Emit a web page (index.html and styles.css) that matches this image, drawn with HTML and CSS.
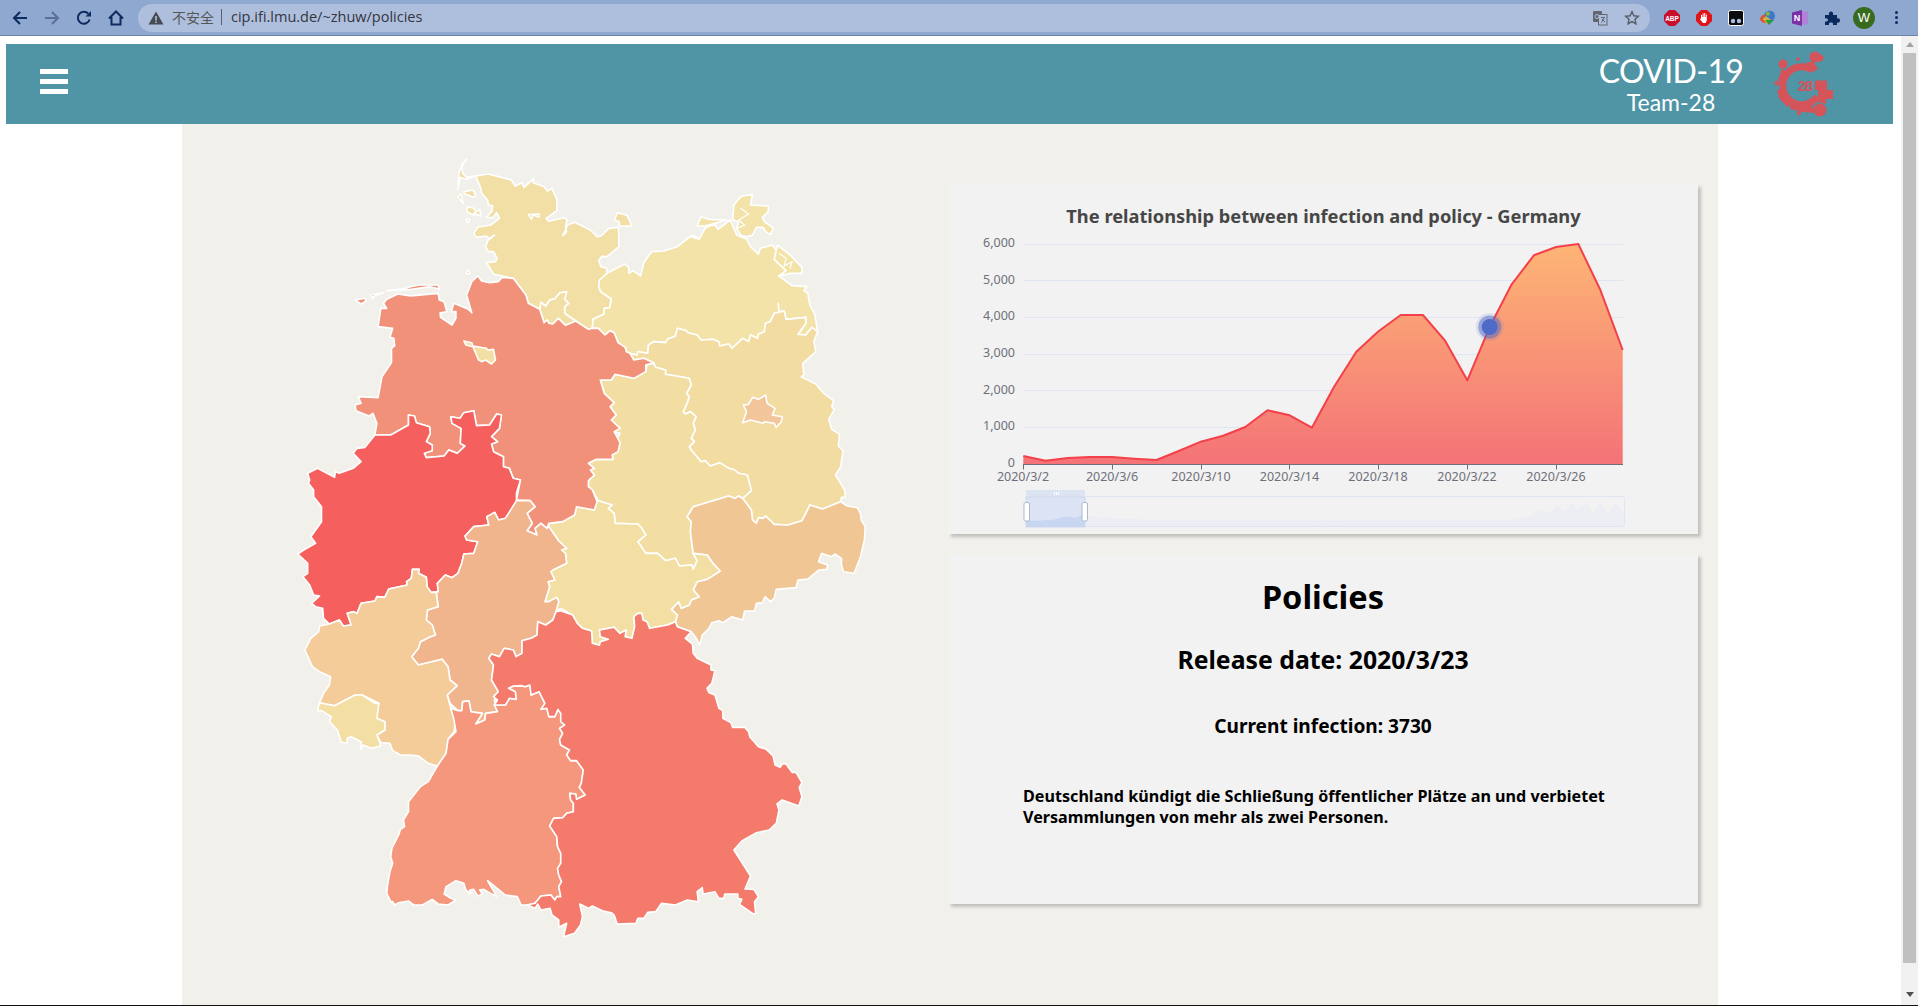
FILE: index.html
```html
<!DOCTYPE html>
<html lang="en">
<head>
  <meta charset="UTF-8">
  <title>COVID-19 Team-28 - Policies</title>
  <link rel="stylesheet" href="styles.css">
</head>
<body>

  <div class="toolbar">
    <div class="nav-icons">
      <svg class="tb-icon" viewBox="0 0 16 16"><path class="stroke-dark" d="M15 8H2M8 2 2 8l6 6"/></svg>
      <svg class="tb-icon" viewBox="0 0 16 16"><path class="stroke-muted" d="M1 8h13M8 2l6 6-6 6"/></svg>
      <svg class="tb-icon" viewBox="0 0 16 16"><path class="stroke-dark" d="M13.6 9.5A6 6 0 1 1 12.3 3.7"/><path class="fill-dark" d="M9.5 6.5H15V1z"/></svg>
      <svg class="tb-icon" viewBox="0 0 16 16"><path class="stroke-dark" d="M1 8.5 8 1.5l7 7M3.5 7v7.5h9V7"/></svg>
    </div>
    <div class="omnibox">
      <svg class="tb-icon" viewBox="0 0 16 16"><path fill="#474b52" d="M8 1.5 15.5 14.5H.5z"/><path fill="#aebfde" d="M7.2 6h1.6v4.5H7.2zM7.2 11.4h1.6V13H7.2z"/></svg>
      <span class="not-secure">不安全</span>
      <span class="url">cip.ifi.lmu.de/~zhuw/policies</span>
      <svg class="tb-icon translate" viewBox="0 0 16 16"><rect x="1" y="1" width="9" height="11" rx="1" fill="#62666d"/><rect x="6.5" y="4.5" width="8.5" height="10.5" fill="#aebfde" stroke="#62666d"/><path d="M9 7.5h4M12.5 7.5 9.500 12.500M10 9l3 3" stroke="#62666d" fill="none"/><circle cx="5" cy="6.500" r="2" fill="none" stroke="#aebfde"/></svg>
      <svg class="tb-icon" viewBox="0 0 16 16"><path fill="none" stroke="#5a5f68" stroke-width="1.500" d="m8 1.800 1.900 4 4.400.5-3.300 3 .9 4.400L8 11.500l-3.900 2.200.9-4.400-3.300-3 4.400-.5z"/></svg>
    </div>
    <div class="extensions">
      <div class="ext"><svg class="tb-icon" viewBox="0 0 16 16"><path fill="#c8102e" d="M5 0h6l5 5v6l-5 5H5l-5-5V5z"/><text class="ext-abp" x="8" y="10.800">ABP</text></svg></div>
      <div class="ext"><svg class="tb-icon" viewBox="0 0 16 16"><path fill="#e0131a" d="M5 0h6l5 5v6l-5 5H5l-5-5V5z"/><path fill="#fff" d="M5 8V5h1v2h.6V3.500h1V7h.6V3h1v4h.6V4.500h1V10l-1 3H7L4 9.500l.6-.7z"/></svg></div>
      <div class="ext"><svg class="tb-icon" viewBox="0 0 16 16"><rect x=".5" y=".5" width="15" height="15" rx="2" fill="#0b0b10" stroke="#fff"/><circle cx="5" cy="11" r="2.200" fill="#a9bfe0"/><circle cx="11" cy="11" r="2.200" fill="#a9bfe0"/></svg></div>
      <div class="ext"><svg class="tb-icon" viewBox="0 0 16 16"><circle cx="9.500" cy="6" r="5.500" fill="#3f78c9"/><path fill="#7bb843" d="M6 2c2-1 4 0 4 2S7 6 6 5z"/><path fill="#e0522a" d="M0 9c1-4 4-5 6-4L3 9l4 4C3 13 1 12 0 9z"/><path fill="#f0c020" d="M3 9l3-3 5 4-4 4z" opacity=".8"/><path fill="#2d9a3a" d="M5 10h9l-5 5z"/></svg></div>
      <div class="ext"><svg class="tb-icon" viewBox="0 0 16 16"><rect x="5" y="1.500" width="11" height="13" rx="1" fill="#b183d6"/><path fill="#7c30a8" d="M0 2.500 10 0v16L0 13.500z"/><text class="ext-n" x="5" y="11">N</text></svg></div>
      <div class="ext"><svg class="tb-icon" viewBox="0 0 16 16"><path fill="#0a2a5e" d="M1 5h4c-.5-2 .5-3.500 2-3.500S9.500 3 9 5h4v3.500c2-.5 3 .5 3 2s-1 2.500-3 2V15H9c.5-2-.5-2.500-2-2.500S4.500 13 5 15H1v-3.500c2 .5 3-.5 3-1.500S3 8 1 8.500z"/></svg></div>
      <div class="ext"><div class="avatar">W</div></div>
      <div class="ext"><div class="menu-dots"><i></i><i></i><i></i></div></div>
    </div>
  </div>

  <div class="window">
    <div class="page">
      <header class="site-header">
        <div class="hamburger"><span></span><span></span><span></span></div>
        <div class="brand">
          <div class="brand-text">
            <div class="brand-title">COVID-19</div>
            <div class="brand-team">Team-28</div>
          </div>
          <svg class="brand-logo" viewBox="0 0 90 80">
            <path class="logo-ring" d="M52.600 26.100A19 19 0 1 0 57.300 52.600"/>
            <g class="logo-fill">
              <circle cx="55" cy="13" r="5.500"/><circle cx="60" cy="14" r="3.500"/>
              <circle cx="23" cy="20" r="4.500"/><circle cx="38" cy="15" r="1.800"/>
              <circle cx="17" cy="39" r="2.500"/><circle cx="39" cy="69" r="2.200"/>
              <circle cx="60" cy="66" r="6.500"/>
              <path d="M46 18h8l4 7-5 3zM55 36.500h12V46h6v9h-7v5l-8-2V46h-3zM17 46h8l6 14-4 3-8-9zM30 60l12 2 10-1 3 8-12-1-13-3zM22 24l6 6-6 8-4-2z"/>
            </g>
            <text class="logo-num" x="44.700" y="47">28</text>
          </svg>
        </div>
      </header>

      <main class="content">
        <svg class="map" viewBox="0 0 1568 2460" preserveAspectRatio="none">
          <!-- Schleswig-Holstein -->
          <polygon class="st-sh" points="495,108 527,102 585,120 595,138 612,128 617,142 642,115 640,128 668,140 676,153 688,145 700,178 700,212 673,235 680,244 718,233 726,240 722,262 725,276 715,287 728,255 745,247 785,270 802,290 812,288 832,265 856,262 857,320 827,350 814,349 806,362 812,380 826,385 827,400 808,420 806,440 811,455 838,477 834,503 820,505 820,522 792,538 789,565 780,568 748,543 720,520 720,500 730,490 720,478 725,455 708,458 695,476 682,480 672,498 660,487 657,508 628,490 622,465 590,415 541,403 522,368 545,365 549,355 540,335 527,335 520,320 528,296 543,285 530,298 522,288 497,292 490,280 500,262 533,255 555,235 548,218 538,233 522,232 535,215 538,197 527,195 525,180 510,160 508,145"/>
          <polygon class="st-sh" points="846,240 853,218 878,226 890,258 858,258 858,245"/>
          <polygon class="st-sh" points="628,224 655,222 655,232 640,224 636,238"/>
          <polygon class="st-sh" points="472,58 460,78 462,100 472,112 495,108 470,118 455,112 450,150 452,100 462,70"/>
          <polygon class="st-sh" points="465,155 488,150 495,165 490,172 468,162"/>
          <polygon class="st-sh" points="450,170 458,162 463,190"/>
          <polygon class="st-sh" points="475,200 490,205 500,222 490,225 472,215"/>
          <polygon class="st-sh" points="505,208 508,228 490,220"/>
          <polygon class="st-sh" points="472,235 480,240 475,248 470,240"/>
          <!-- Hamburg -->
          <polygon class="st-sh" points="657,508 660,487 672,498 682,480 695,476 708,458 725,455 720,478 730,490 720,500 720,520 748,543 722,556 704,535 690,552 680,550 676,540 668,548 660,520"/>
          <!-- Mecklenburg-Vorpommern -->
          <polygon class="st-mv" points="827,400 872,372 882,383 882,400 893,392 912,408 920,368 940,335 970,333 1005,320 1042,285 1060,295 1040,290 1060,298 1075,265 1098,252 1108,268 1138,240 1148,265 1155,285 1180,297 1190,320 1210,343 1215,325 1245,315 1258,335 1250,358 1280,392 1262,408 1295,437 1332,440 1325,452 1335,460 1340,495 1352,522 1360,575 1345,562 1330,585 1310,583 1330,550 1330,532 1280,538 1275,513 1262,515 1260,490 1262,517 1250,520 1240,545 1228,550 1225,575 1210,582 1208,595 1190,585 1185,605 1170,595 1143,625 1135,612 1112,618 1110,605 1095,598 1065,600 1055,585 1032,578 1028,572 1005,565 1000,588 980,598 975,608 945,605 932,615 930,640 905,635 903,645 890,642 876,635 873,622 855,608 845,578 835,572 822,585 805,565 790,565 792,538 820,522 820,505 834,503 838,477 811,455 806,440 808,420"/>
          <polygon class="st-mv" points="1065,230 1085,238 1130,240 1075,258 1055,258"/>
          <polygon class="st-mv" points="1148,195 1165,170 1195,162 1190,195 1235,198 1235,215 1220,232 1225,245 1248,265 1240,283 1228,275 1222,262 1205,262 1195,285 1180,290 1165,285 1155,265 1160,245 1145,240"/>
          <polyline class="st-line" points="1165,205 1185,222 1160,240 1175,255 1155,265"/>
          <polygon class="st-mv" points="1262,408 1280,392 1250,358 1258,315 1290,345 1320,382 1320,400 1290,400"/>
          <polyline class="st-line" points="1262,340 1280,355 1275,378 1295,365 1290,385"/>
          <!-- Brandenburg -->
          <polygon class="st-bb" points="1005,565 1028,572 1032,578 1055,585 1065,600 1095,598 1110,605 1112,618 1135,612 1143,625 1170,595 1185,605 1190,585 1208,595 1210,582 1225,575 1228,550 1240,545 1250,520 1262,517 1275,513 1280,538 1330,532 1330,550 1310,583 1330,585 1345,562 1360,575 1350,605 1355,635 1322,670 1325,705 1318,710 1355,732 1375,760 1400,782 1395,800 1402,808 1388,838 1395,868 1415,882 1412,918 1424,932 1418,980 1405,1005 1428,1050 1430,1072 1420,1072 1418,1085 1372,1107 1340,1095 1330,1120 1320,1142 1285,1155 1250,1153 1228,1128 1222,1135 1210,1133 1205,1150 1195,1140 1192,1110 1170,1075 1192,1052 1182,1005 1160,1000 1150,990 1135,985 1112,968 1088,978 1075,962 1065,965 1040,930 1035,920 1048,905 1040,895 1050,870 1045,850 1052,830 1038,815 1025,822 1020,815 1030,788 1035,770 1028,760 1040,735 1035,715 975,703 975,690 950,682 945,668 920,655 895,660 885,640 876,635 890,642 903,645 905,635 930,640 932,615 945,605 975,608 980,598 1000,588"/>
          <!-- Berlin -->
          <polygon class="st-be" points="1195,772 1210,778 1228,765 1232,790 1252,805 1245,825 1270,830 1268,845 1255,862 1250,850 1225,845 1222,850 1190,840 1170,848 1180,815 1172,795 1185,793"/>
          <!-- Sachsen-Anhalt -->
          <polygon class="st-st" points="810,720 838,720 847,703 895,715 925,695 928,675 945,670 950,682 975,690 975,703 1035,715 1040,735 1028,760 1035,770 1030,788 1020,815 1025,822 1038,815 1052,830 1045,850 1050,870 1040,895 1048,905 1035,920 1040,930 1065,965 1075,962 1088,978 1112,968 1135,985 1150,990 1160,1000 1182,1005 1192,1052 1170,1075 1160,1068 1150,1075 1135,1068 1045,1100 1030,1130 1040,1145 1038,1175 1040,1195 1045,1240 1055,1262 1045,1288 1042,1275 1010,1278 1000,1255 975,1262 955,1240 925,1240 905,1205 925,1185 915,1165 905,1152 848,1150 845,1120 830,1105 840,1095 805,1082 790,1050 780,1040 780,1022 795,1005 785,990 795,985 780,970 800,958 842,958 840,945 855,935 860,908 848,905 860,880 845,875 860,865 838,840 850,825 835,800 845,788 820,760"/>
          <!-- Sachsen -->
          <polygon class="st-sn" points="1045,1100 1135,1068 1150,1075 1160,1068 1170,1075 1192,1110 1195,1140 1205,1150 1210,1133 1222,1135 1228,1128 1250,1153 1285,1155 1320,1142 1330,1120 1340,1095 1372,1107 1418,1085 1432,1097 1460,1103 1468,1120 1470,1140 1480,1160 1478,1200 1468,1250 1452,1300 1425,1295 1420,1275 1420,1255 1403,1242 1395,1250 1370,1240 1362,1265 1385,1275 1383,1288 1362,1290 1335,1317 1310,1320 1305,1343 1255,1348 1250,1375 1240,1385 1227,1370 1220,1388 1205,1390 1200,1413 1175,1413 1170,1440 1143,1430 1120,1448 1110,1442 1092,1448 1085,1465 1068,1485 1062,1515 1050,1490 1040,1475 1005,1460 1000,1445 1005,1425 990,1408 1008,1385 1015,1405 1035,1395 1040,1380 1060,1370 1045,1350 1055,1325 1080,1318 1113,1293 1095,1270 1080,1245 1045,1240 1040,1195 1038,1175 1040,1145 1030,1130"/>
          <!-- Thueringen -->
          <polygon class="st-th" points="805,1082 840,1095 830,1105 845,1120 848,1150 905,1152 915,1165 925,1185 905,1205 925,1240 955,1240 975,1262 1000,1255 1010,1278 1042,1275 1045,1288 1055,1262 1045,1240 1080,1245 1095,1270 1113,1293 1080,1318 1055,1325 1045,1350 1060,1370 1040,1380 1035,1395 1015,1405 1008,1385 990,1408 1005,1425 1000,1445 980,1455 935,1465 928,1445 918,1440 915,1420 905,1420 895,1430 897,1460 890,1495 873,1490 875,1470 860,1480 845,1462 808,1470 810,1490 830,1498 810,1505 808,1516 790,1510 788,1473 765,1465 752,1450 740,1425 710,1405 698,1415 695,1385 705,1385 700,1372 680,1385 670,1385 682,1340 678,1325 695,1320 685,1295 690,1290 725,1270 722,1240 712,1230 725,1225 705,1203 680,1160 680,1150 715,1145 745,1125 750,1100 795,1110 795,1085"/>
          <!-- Niedersachsen -->
          <polygon class="st-ni" points="500,408 510,423 530,428 552,425 562,412 590,415 622,465 628,490 657,508 660,520 668,548 676,540 680,550 690,552 704,535 722,556 748,543 780,568 790,565 805,565 822,585 835,572 845,578 855,608 873,622 876,635 885,640 895,660 920,655 945,668 925,675 925,695 895,715 847,703 838,720 810,720 820,760 845,788 835,800 850,825 838,840 860,865 845,875 860,908 855,935 840,945 842,958 800,958 780,970 795,985 785,990 795,1005 780,1022 780,1040 790,1050 802,1085 795,1110 750,1100 745,1125 715,1145 680,1150 675,1165 660,1150 645,1165 650,1185 625,1172 638,1150 625,1120 645,1100 633,1082 598,1080 608,1020 590,1015 580,985 565,980 565,950 540,935 535,912 550,905 535,890 555,865 560,825 548,822 530,855 497,857 490,812 465,818 455,835 432,830 435,850 458,865 456,910 468,918 448,940 427,930 415,948 370,953 365,940 385,932 385,915 370,905 380,880 378,860 345,848 340,828 325,825 325,855 280,885 240,885 245,850 235,820 225,828 192,812 190,795 205,790 198,770 248,773 258,710 282,668 282,625 290,617 288,595 278,592 285,565 248,560 255,505 270,505 262,490 270,478 298,462 330,468 400,460 403,480 415,485 422,515 405,518 406,532 435,555 445,535 445,515 433,515 440,490 475,507 485,518 472,465 485,425"/>
          <polygon class="st-ni" points="190,480 215,475 218,483 205,492"/>
          <polygon class="st-ni" points="230,465 262,458 235,470 235,477"/>
          <polygon class="st-ni" points="270,452 320,445 330,440 352,435 400,435 403,447 380,440 320,450"/>
          <polygon class="st-ni" points="470,400 475,390 480,402"/>
          <!-- Bremen -->
          <polygon class="st-th" points="465,603 485,608 488,618 522,625 525,630 540,628 545,660 535,672 520,660 510,665 502,660 488,620 470,615"/>
          <!-- Nordrhein-Westfalen -->
          <polygon class="st-nw" points="240,885 280,885 325,855 325,825 340,828 345,848 378,860 380,880 370,905 385,915 385,932 365,940 370,953 415,948 427,930 448,940 468,918 456,910 458,865 435,850 432,830 455,835 465,818 490,812 497,857 530,855 548,822 560,825 555,865 535,890 550,905 535,912 540,935 565,950 565,980 580,985 590,1015 608,1020 598,1060 598,1085 570,1135 553,1140 543,1117 523,1130 528,1155 490,1160 468,1188 472,1200 500,1205 490,1240 465,1242 460,1268 450,1300 435,1313 418,1305 398,1330 400,1355 382,1357 372,1340 370,1312 350,1300 352,1288 335,1288 332,1315 320,1325 322,1335 275,1347 265,1372 245,1370 240,1383 205,1390 195,1420 185,1415 170,1420 180,1455 160,1458 150,1440 125,1452 110,1435 108,1405 90,1400 80,1390 100,1368 85,1365 75,1335 58,1310 70,1300 70,1270 45,1242 60,1230 90,1210 78,1190 105,1145 105,1100 85,1070 85,1050 72,1030 75,1020 70,1000 95,985 138,1012 140,995 150,1000 185,985 205,965 185,940 195,925 215,922"/>
          <!-- Hessen -->
          <polygon class="st-he" points="598,1082 633,1082 645,1100 625,1120 638,1150 625,1172 650,1185 645,1165 660,1150 675,1165 680,1160 705,1203 725,1225 712,1230 722,1240 725,1270 690,1290 685,1295 695,1320 678,1325 682,1340 670,1385 680,1385 700,1372 705,1385 698,1415 690,1440 672,1455 652,1445 650,1485 635,1495 612,1502 612,1540 597,1550 590,1530 567,1525 555,1550 535,1542 528,1555 540,1575 535,1620 545,1640 552,1655 542,1680 550,1715 520,1720 518,1740 495,1752 512,1720 483,1715 478,1683 462,1685 460,1712 450,1712 430,1690 423,1665 448,1637 430,1620 425,1580 410,1558 350,1575 333,1550 350,1525 355,1505 380,1490 393,1485 385,1455 370,1440 373,1410 400,1400 395,1357 400,1355 398,1330 418,1305 435,1313 450,1300 460,1268 465,1242 490,1240 500,1205 472,1200 468,1188 490,1160 528,1155 523,1130 543,1117 553,1140 570,1135"/>
          <!-- Rheinland-Pfalz -->
          <polygon class="st-rp" points="100,1458 125,1452 150,1440 160,1458 180,1455 170,1420 185,1415 195,1420 205,1390 240,1383 245,1370 265,1372 275,1347 322,1335 320,1325 332,1315 335,1288 352,1288 350,1300 370,1312 372,1340 382,1357 395,1357 400,1400 373,1410 370,1440 385,1455 393,1485 380,1490 355,1505 350,1525 333,1550 350,1575 410,1558 425,1580 430,1620 448,1637 423,1665 432,1705 445,1740 440,1775 425,1798 420,1840 398,1878 375,1870 350,1848 330,1845 305,1845 285,1832 278,1810 255,1808 245,1785 265,1770 265,1745 243,1735 250,1690 208,1665 190,1665 138,1697 100,1688 110,1660 125,1635 128,1610 100,1595 82,1580 75,1562 63,1530 78,1495 98,1475"/>
          <!-- Saarland -->
          <polygon class="st-th" points="100,1688 138,1697 190,1665 208,1665 240,1690 250,1690 245,1735 265,1745 265,1770 245,1785 255,1818 230,1825 210,1815 205,1828 205,1805 180,1790 170,1795 170,1810 155,1807 145,1770 125,1745 130,1730 105,1712 95,1712"/>
          <!-- Baden-Wuerttemberg -->
          <polygon class="st-bw" points="398,1878 420,1840 425,1798 445,1775 440,1740 432,1705 450,1712 460,1712 462,1685 478,1683 483,1715 512,1720 495,1752 518,1740 520,1720 550,1715 542,1695 570,1695 580,1675 597,1678 595,1655 578,1645 590,1638 612,1637 620,1640 632,1635 635,1665 655,1655 670,1690 660,1708 675,1705 680,1730 695,1730 703,1708 710,1720 710,1745 720,1755 707,1765 715,1780 707,1798 710,1815 732,1830 725,1845 735,1862 750,1862 767,1890 762,1930 757,1942 772,1965 750,1978 748,1962 733,1960 735,1980 742,1990 742,2015 725,2020 715,2033 692,2035 682,2058 700,2090 702,2120 710,2140 710,2170 702,2185 705,2205 712,2225 705,2240 710,2270 700,2270 695,2280 685,2265 660,2268 645,2290 625,2295 610,2295 600,2270 570,2265 525,2222 548,2270 515,2248 505,2250 512,2262 500,2268 490,2248 480,2250 483,2262 470,2250 465,2230 445,2222 420,2240 415,2262 432,2275 445,2280 425,2295 400,2292 385,2278 360,2295 338,2295 325,2283 300,2288 290,2295 285,2285 280,2285 270,2260 272,2235 278,2195 285,2170 280,2150 283,2125 300,2085 305,2068 315,2060 312,2040 325,2015 325,1985 355,1940 375,1925"/>
          <!-- Bayern -->
          <polygon class="st-by" points="710,1412 740,1425 752,1450 765,1465 788,1473 790,1510 808,1516 810,1505 830,1498 810,1490 808,1470 845,1462 860,1480 875,1470 873,1490 890,1495 897,1460 895,1430 905,1420 915,1420 918,1440 928,1445 935,1465 980,1455 1000,1445 1005,1460 1040,1475 1025,1495 1043,1512 1045,1540 1055,1555 1090,1575 1090,1590 1100,1592 1092,1630 1080,1645 1085,1658 1100,1665 1110,1705 1120,1712 1120,1735 1140,1748 1145,1762 1175,1762 1185,1775 1188,1790 1210,1820 1230,1828 1247,1848 1252,1875 1265,1882 1270,1872 1280,1872 1295,1897 1305,1897 1320,1928 1313,1942 1320,1970 1312,1998 1270,1980 1257,1992 1262,2010 1255,2050 1237,2070 1205,2078 1168,2103 1148,2130 1190,2208 1176,2247 1198,2248 1210,2270 1200,2285 1203,2320 1197,2322 1162,2293 1168,2278 1158,2275 1158,2262 1125,2262 1122,2275 1110,2275 1100,2255 1070,2262 1068,2243 1055,2255 1058,2285 1030,2280 1000,2295 965,2290 950,2315 930,2317 920,2335 905,2335 900,2350 853,2352 845,2325 838,2318 815,2312 790,2298 780,2305 758,2292 765,2330 760,2355 745,2380 717,2390 725,2350 705,2362 705,2340 688,2325 683,2305 660,2310 652,2292 645,2305 625,2295 645,2290 660,2268 685,2265 695,2280 700,2270 710,2270 705,2240 712,2225 705,2205 702,2185 710,2170 710,2140 702,2120 700,2090 682,2058 692,2035 715,2033 725,2020 742,2015 742,1990 735,1980 733,1960 748,1962 750,1978 772,1965 757,1942 762,1930 767,1890 750,1862 735,1862 725,1845 732,1830 710,1815 707,1798 715,1780 707,1765 720,1755 710,1745 710,1720 703,1708 695,1730 680,1730 675,1705 660,1708 670,1690 655,1655 635,1665 632,1635 620,1640 612,1637 590,1638 578,1645 595,1655 597,1678 580,1675 570,1695 542,1695 550,1680 540,1670 552,1655 545,1640 535,1620 540,1575 528,1555 535,1542 555,1550 567,1525 590,1530 597,1550 612,1540 612,1502 635,1495 650,1485 652,1445 672,1455 690,1440 698,1415"/>
        </svg>

        <div class="cards">
          <section class="card">
            <svg class="chart" viewBox="948 184 750 350">
              <defs>
                <linearGradient id="areaFill" gradientUnits="userSpaceOnUse" x1="0" y1="244" x2="0" y2="464">
                  <stop offset="0" stop-color="#fdb575"/>
                  <stop offset="1" stop-color="#f47377"/>
                </linearGradient>
              </defs>
              <text class="chart-title" x="1323.500" y="223">The relationship between infection and policy - Germany</text>

              <g class="grid">
                <line x1="1023" x2="1623" y1="244.500" y2="244.500"/>
                <line x1="1023" x2="1623" y1="280.500" y2="280.500"/>
                <line x1="1023" x2="1623" y1="317.500" y2="317.500"/>
                <line x1="1023" x2="1623" y1="354.500" y2="354.500"/>
                <line x1="1023" x2="1623" y1="390.500" y2="390.500"/>
                <line x1="1023" x2="1623" y1="427.500" y2="427.500"/>
              </g>
              <g class="y-labels">
                <text x="1015" y="247">6,000</text>
                <text x="1015" y="284">5,000</text>
                <text x="1015" y="320">4,000</text>
                <text x="1015" y="357">3,000</text>
                <text x="1015" y="394">2,000</text>
                <text x="1015" y="430">1,000</text>
                <text x="1015" y="467">0</text>
              </g>

              <polygon class="area" points="1023.300,456 1045.500,460.700 1067.700,458 1089.900,457 1112.100,457 1134.300,458.700 1156.500,460 1178.700,451 1200.900,441.700 1223.100,435.700 1245.300,427 1267.500,410.300 1289.700,415.300 1311.900,427.700 1334.100,386.700 1356.300,351.700 1378.500,331.300 1400.700,315 1422.900,315 1445.100,340.700 1467.300,380.300 1489.500,327.300 1511.700,284.300 1533.900,255.300 1556.100,247 1578.300,244 1600.500,290.300 1622.700,350 1622.700,464.500 1023.300,464.500"/>
              <polyline class="line" points="1023.300,456 1045.500,460.700 1067.700,458 1089.900,457 1112.100,457 1134.300,458.700 1156.500,460 1178.700,451 1200.900,441.700 1223.100,435.700 1245.300,427 1267.500,410.300 1289.700,415.300 1311.900,427.700 1334.100,386.700 1356.300,351.700 1378.500,331.300 1400.700,315 1422.900,315 1445.100,340.700 1467.300,380.300 1489.500,327.300 1511.700,284.300 1533.900,255.300 1556.100,247 1578.300,244 1600.500,290.300 1622.700,350"/>

              <circle class="marker-halo-2" cx="1489.700" cy="327" r="14"/>
              <circle class="marker-halo-1" cx="1489.700" cy="327" r="11.500"/>
              <circle class="marker" cx="1489.700" cy="327" r="8"/>

              <path class="axis" d="M1023 464.500H1623M1023.500 464.500v5M1112.500 464.500v5M1201.500 464.500v5M1289.500 464.500v5M1378.500 464.500v5M1467.500 464.500v5M1556.500 464.500v5"/>
              <g class="x-labels">
                <text x="1023" y="481">2020/3/2</text>
                <text x="1112" y="481">2020/3/6</text>
                <text x="1201" y="481">2020/3/10</text>
                <text x="1289.500" y="481">2020/3/14</text>
                <text x="1378" y="481">2020/3/18</text>
                <text x="1467" y="481">2020/3/22</text>
                <text x="1556" y="481">2020/3/26</text>
              </g>

              <!-- range slider under the chart -->
              <polygon class="zoom-mini" points="1085,515.700 1093,515.700 1100,518.700 1107,516.700 1117,519 1125,518.300 1137,519.300 1173,520 1340,520.500 1500,519.700 1500,526 1085,526"/>
              <polygon class="zoom-mini" points="1500,520 1510,519.500 1517,518 1530,516 1540,510 1550,513.300 1556.700,505.700 1565,511.700 1571.700,503.300 1578.300,510 1586.700,502.300 1593.300,513.300 1600,502.300 1608.300,513.300 1615,503.300 1624.500,513.300 1624.500,526 1500,526"/>
              <rect class="zoom-track" x="1026.500" y="496.500" width="598" height="30" rx="2"/>
              <rect class="zoom-bar" x="1026" y="490" width="59" height="7"/>
              <path class="zoom-grip" d="M1054.500 492v3M1056.500 492v3M1058.500 492v3"/>
              <rect class="zoom-select" x="1026" y="497" width="59" height="30"/>
              <polygon class="zoom-inner" points="1026,520.500 1040,520.700 1055,519.500 1063,517 1069,516.500 1075,518 1081,515.700 1085,515.700 1085,527 1026,527"/>
              <rect class="zoom-handle" x="1024" y="502.500" width="5.500" height="18.500" rx="1.500"/>
              <rect class="zoom-handle" x="1082" y="502.500" width="5.500" height="18.500" rx="1.500"/>
            </svg>
          </section>

          <section class="card policy">
            <h1>Policies</h1>
            <h2>Release date: 2020/3/23</h2>
            <h3>Current infection: 3730</h3>
            <p>Deutschland kündigt die Schließung öffentlicher Plätze an und verbietet Versammlungen von mehr als zwei Personen.</p>
          </section>
        </div>
      </main>
    </div>

    <div class="scrollbar">
      <div class="arrow-up"></div>
      <div class="thumb"></div>
      <div class="arrow-down"></div>
    </div>
  </div>
  <div class="screen-edge"></div>

</body>
</html>
```

FILE: styles.css
```css
html, body {
  margin: 0;
  height: 1006px;
  overflow: hidden;
  background-color: white;
}

/* browser bar */
.toolbar {
  display: flex;
  align-items: center;
  height: 35px;
  padding-right: 6px;
  background-color: #8fa8d0;
  border-bottom: 1px solid #6f83a5;
}
.nav-icons {
  display: flex;
  gap: 16px;
  padding-left: 12px;
}
.tb-icon {
  display: block;
  width: 16px;
  height: 16px;
}
.stroke-dark, .stroke-muted {
  fill: none;
  stroke-width: 2;
}
.stroke-dark {
  stroke: #0c2b5e;
}
.stroke-muted {
  stroke: #5b7099;
}
.fill-dark {
  fill: #0c2b5e;
}
.omnibox {
  flex: 1;
  display: flex;
  align-items: center;
  height: 28px;
  margin-left: 14px;
  padding: 0 10px;
  background-color: #aebfde;
  border-radius: 14px;
}
.not-secure {
  margin: 0 0 2px 8px;
  padding-right: 7px;
  border-right: 1px solid #5d6068;
  line-height: 16px;
  font-family: "Noto Sans CJK SC", sans-serif;
  font-size: 14px;
  color: #565656;
}
.url {
  flex: 1;
  margin: 0 0 2px 9px;
  font-family: "Open Sans", sans-serif;
  font-size: 14.500px;
  color: #33363d;
}
.translate {
  margin-right: 16px;
}
.extensions {
  display: flex;
  margin-left: 6px;
}
.ext {
  display: flex;
  justify-content: center;
  align-items: center;
  width: 32px;
}
.ext-abp {
  font-family: "Liberation Sans", sans-serif;
  font-size: 6.5px;
  font-weight: bold;
  fill: white;
  text-anchor: middle;
}
.ext-n {
  font-family: "Liberation Sans", sans-serif;
  font-size: 9px;
  font-weight: bold;
  fill: white;
  text-anchor: middle;
}
.avatar {
  width: 22px;
  height: 22px;
  border-radius: 50%;
  background-color: #376b1e;
  color: white;
  font-family: "Liberation Sans", sans-serif;
  font-size: 13px;
  line-height: 22px;
  text-align: center;
}
.menu-dots {
  display: flex;
  flex-direction: column;
  gap: 2px;
}
.menu-dots i {
  width: 3px;
  height: 3px;
  border-radius: 50%;
  background-color: #0c2b5e;
}

/* page */
.window {
  display: flex;
  height: 969px;
}
.page {
  flex: 1;
  padding: 8px 8px 0 6px;
  min-width: 0;
}
.site-header {
  display: flex;
  justify-content: space-between;
  align-items: center;
  height: 80px;
  background-color: #5095a6;
}
.hamburger {
  margin-left: 34px;
}
.hamburger span {
  display: block;
  width: 28px;
  height: 5px;
  margin-bottom: 5px;
  background-color: white;
}
.brand {
  display: flex;
  align-items: center;
  margin-right: 43px;
}
.brand-text {
  display: flex;
  flex-direction: column;
  align-items: center;
  width: 144px;
  color: white;
  white-space: nowrap;
  font-family: "Lato", sans-serif;
}
.brand-title {
  font-size: 32px;
  letter-spacing: -0.7px;
  line-height: 36px;
}
.brand-team {
  font-size: 23px;
  line-height: 26px;
}
.brand-logo {
  width: 90px;
  height: 80px;
  margin-left: 17px;
}
.logo-ring {
  fill: none;
  stroke: #d4545a;
  stroke-width: 7;
}
.logo-fill {
  fill: #d4545a;
}
.logo-num {
  font-family: "Liberation Sans", sans-serif;
  font-size: 15px;
  font-weight: bold;
  letter-spacing: -1.5px;
  fill: #d4545a;
  text-anchor: middle;
}

.content {
  display: flex;
  align-items: flex-start;
  width: 1536px;
  height: 881px;
  margin-left: 176px;
  background-color: #f1f0eb;
}

/* map */
.map {
  flex: none;
  width: 620px;
  height: 820px;
  margin: 16px 0 0 98px;
}
.map polygon {
  stroke: white;
  stroke-width: 1.6px;
  stroke-linejoin: round;
  vector-effect: non-scaling-stroke;
}
.st-line {
  fill: none;
  stroke: white;
  stroke-width: 1.2px;
  vector-effect: non-scaling-stroke;
}
.st-sh { fill: #f2dfa5; }
.st-mv { fill: #f3e3a8; }
.st-bb { fill: #f2dca1; }
.st-be { fill: #f2c59a; }
.st-st { fill: #f2dea3; }
.st-sn { fill: #f0c695; }
.st-th { fill: #f3dfa4; }
.st-ni { fill: #f29179; }
.st-nw { fill: #f55f5d; }
.st-he { fill: #f1b58e; }
.st-rp { fill: #f3cc9a; }
.st-bw { fill: #f4977c; }
.st-by { fill: #f47a6c; }

/* right column */
.cards {
  display: flex;
  flex-direction: column;
  gap: 20px;
  width: 750px;
  margin: 60px 0 0 48px;
}
.card {
  height: 350px;
  background-color: #f2f2f2;
  box-shadow: 3px 3px 3px rgba(0,0,0,0.2);
}
.chart {
  display: block;
  width: 750px;
  height: 350px;
}
.chart text {
  font-family: "Noto Sans", sans-serif;
}
.chart-title {
  font-size: 18.250px;
  font-weight: bold;
  fill: #464646;
  text-anchor: middle;
}
.grid line {
  stroke: #e0e6f1;
}
.y-labels text {
  font-size: 12.500px;
  fill: #6e7079;
  text-anchor: end;
}
.x-labels text {
  font-size: 12.500px;
  fill: #6e7079;
  text-anchor: middle;
}
.area {
  fill: url(#areaFill);
}
.line {
  fill: none;
  stroke: #f4404a;
  stroke-width: 2;
  stroke-linejoin: round;
}
.marker { fill: #4f6bc9; }
.marker-halo-1 { fill: #4f6bc9; opacity: 0.5; }
.marker-halo-2 { fill: #4f6bc9; opacity: 0.12; }
.axis {
  fill: none;
  stroke: #6e7079;
}
.zoom-track {
  fill: none;
  stroke: #dfe5f4;
}
.zoom-mini {
  fill: #eceef4;
}
.zoom-bar {
  fill: #dce3f1;
}
.zoom-grip {
  stroke: white;
  fill: none;
}
.zoom-select {
  fill: #dbe3f4;
  stroke: #cdd7ec;
}
.zoom-inner {
  fill: #c8d6f1;
}
.zoom-handle {
  fill: white;
  stroke: #acb8d1;
}

.policy {
  padding: 21px 75px 0;
  box-sizing: border-box;
  font-family: "Noto Sans", sans-serif;
  color: black;
  text-align: center;
}
.policy h1 {
  margin: 0;
  font-size: 32.500px;
  line-height: 44px;
}
.policy h2 {
  margin: 24px 0 0;
  font-size: 24.800px;
  line-height: 32px;
}
.policy h3 {
  margin: 38px 0 0;
  font-size: 19.100px;
  line-height: 26px;
}
.policy p {
  margin: 47px 0 0;
  font-size: 16.150px;
  font-weight: bold;
  line-height: 21px;
  text-align: left;
}

/* scrollbar */
.scrollbar {
  display: flex;
  flex-direction: column;
  width: 17px;
  background-color: #f1f1f1;
}
.arrow-up {
  flex: none;
  box-sizing: border-box;
  width: 0;
  height: 5px;
  margin: 6px auto 6px;
  border: 4px solid transparent;
  border-top: 0;
  border-bottom: 5px solid #a3a3a3;
}
.thumb {
  flex: none;
  height: 910px;
  margin: 0 2px;
  background-color: #c0c0c0;
}
.arrow-down {
  flex: none;
  box-sizing: border-box;
  width: 0;
  height: 5px;
  margin: 29px auto 0;
  border: 4px solid transparent;
  border-bottom: 0;
  border-top: 5px solid #505050;
}
.screen-edge {
  height: 1px;
  background-color: #111;
}
```
